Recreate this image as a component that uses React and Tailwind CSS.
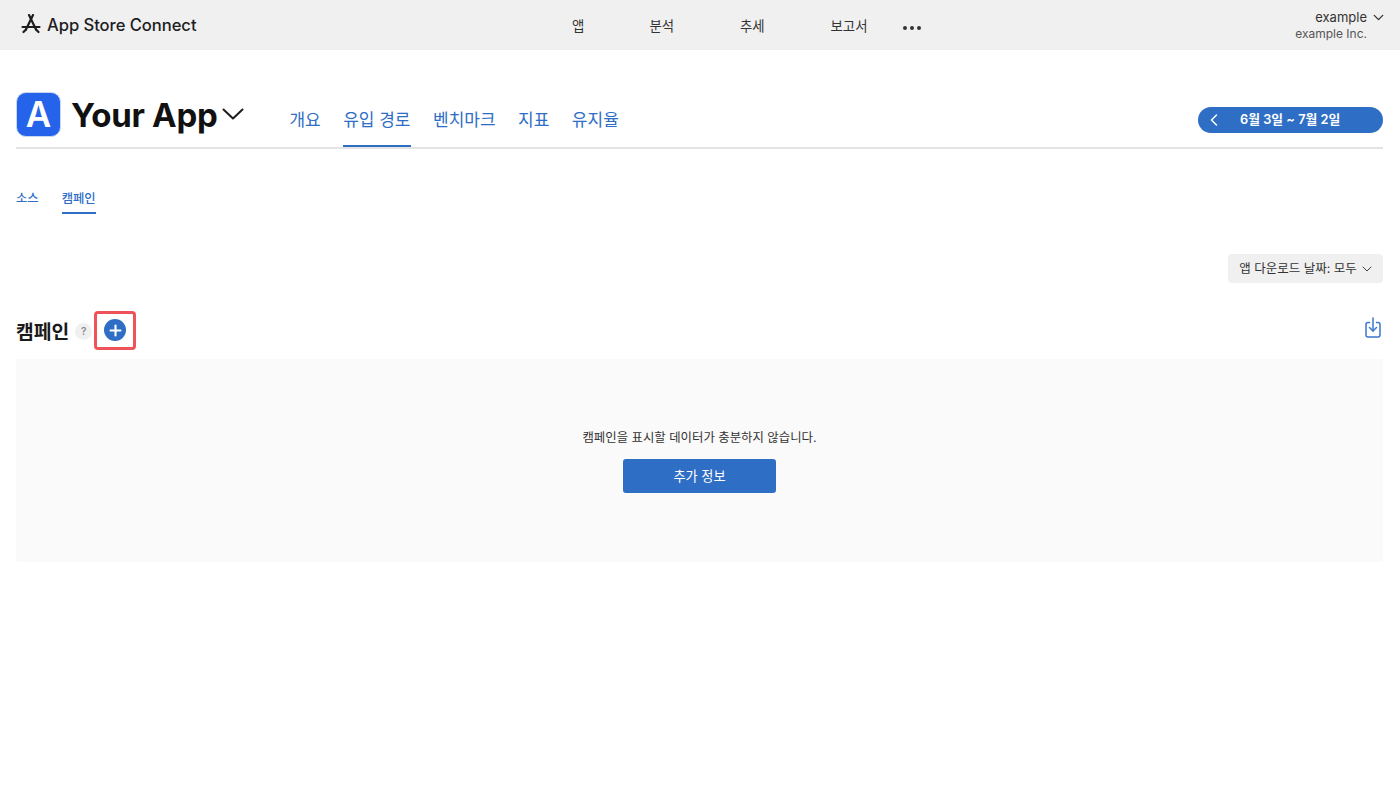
import { ChevronDown, ChevronLeft, Plus } from "lucide-react";

const font = { fontFamily: '"Inter", "Noto Sans CJK KR", sans-serif' };

function StoreLogo({ className }) {
  return (
    <svg viewBox="0 0 20 20" className={className} fill="none" stroke="#1d1d1f" strokeWidth="2.2" strokeLinecap="round">
      <path d="M8 1 L15 15.5" />
      <path d="M12 1 L5 15.5" />
      <path d="M1.5 13 H18.5" />
      <path d="M2.5 18 L5 15.5" />
      <path d="M15 15.5 L17.5 18" />
    </svg>
  );
}

const mainNav = [
  { label: "앱", width: "w-[12px]" },
  { label: "분석", width: "w-[25px]" },
  { label: "추세", width: "w-[25px]" },
  { label: "보고서", width: "w-[37px]" },
];

const appTabs = ["개요", "유입 경로", "벤치마크", "지표", "유지율"];

export default function App() {
  return (
    <div style={font} className="min-h-[800px] bg-white text-[#1d1d1f]">
      <header className="relative h-[50px] bg-[#f0f0f0] flex items-center pl-[21px] pr-[16px]">
        <StoreLogo className="w-[20px] h-[20px] mb-[2px]" />
        <span className="ml-[6px] text-[16.6px] font-medium tracking-[-0.05px]">App Store Connect</span>
        <nav className="absolute left-[572px] top-0 h-[50px] flex items-center gap-[65.5px] text-[13.4px] text-[#333]">
          {mainNav.map((n) => (
            <span key={n.label} className={"whitespace-nowrap pt-[3px] " + n.width}>{n.label}</span>
          ))}
          <span className="flex gap-[3px] -ml-[30px] mt-[6px]">
            <i className="block w-[4px] h-[4px] rounded-full bg-[#333]" />
            <i className="block w-[4px] h-[4px] rounded-full bg-[#333]" />
            <i className="block w-[4px] h-[4px] rounded-full bg-[#333]" />
          </span>
        </nav>
        <div className="ml-auto flex flex-col items-end text-right pr-[1px]">
          <div className="flex items-center text-[13px] leading-[16px] text-[#333] mb-[1px]">
            example
            <ChevronDown className="w-[17px] h-[17px] ml-[3px] -mr-[4px] -my-[1px]" strokeWidth={1.9} />
          </div>
          <div className="text-[12px] leading-[15px] text-[#555] pr-[16px]">example Inc.</div>
        </div>
      </header>

      <main className="pl-[16px] pr-[17px]">
        <div className="h-[99px] flex items-end border-b-2 border-[#e3e3e3]">
          <div className="flex items-center self-start mt-[42px]">
            <div className="w-[45px] h-[45px] rounded-[10px] bg-[#2563eb] border border-[#c9d6f0] flex items-center justify-center text-white text-[35px] font-semibold leading-none">
              A
            </div>
            <span className="ml-[10px] pt-[2px] text-[33px] font-bold tracking-[-0.3px] text-[#111] leading-none">Your App</span>
            <svg viewBox="0 0 22 12" className="w-[22px] h-[12px] ml-[5px] mt-[-2px]" fill="none" stroke="#1d1d1f" strokeWidth="2" strokeLinecap="round" strokeLinejoin="round">
              <path d="M1.5 1.5 L11 10.5 L20.5 1.5" />
            </svg>
          </div>
          <nav className="ml-[45px] flex gap-[22.5px] text-[17px] text-[#2f6ec5] h-[50px]">
            {appTabs.map((t) => (
              <span
                key={t}
                className={
                  "flex items-center pb-[1px] border-b-2 " +
                  (t === "유입 경로" ? "border-[#2f6ec5]" : "border-transparent")
                }
              >
                {t}
              </span>
            ))}
          </nav>
          <div className="ml-auto self-start mt-[57px] w-[185px] h-[26px] rounded-full bg-[#2f6ec5] text-white flex items-center">
            <ChevronLeft className="w-[20px] h-[20px] ml-[6px]" strokeWidth={1.8} />
            <span className="ml-[16px] text-[12.8px] font-semibold whitespace-nowrap">6월 3일 ~ 7월 2일</span>
          </div>
        </div>

        <div className="flex gap-[23px] mt-[38px] text-[12.3px] font-medium text-[#2f6ec5]">
          <span className="h-[27px] pt-[3px]">소스</span>
          <span className="h-[27px] pt-[3px] border-b-2 border-[#2f6ec5]">캠페인</span>
        </div>

        <div className="flex justify-end mt-[40px]">
          <div className="h-[29px] w-[155px] pt-px rounded-[4px] bg-[#f0f0f0] flex items-center justify-center text-[12.5px] text-[#333]">
            앱 다운로드 날짜: 모두
            <ChevronDown className="w-[16px] h-[16px] ml-[2px] -mr-[3px]" strokeWidth={1.4} />
          </div>
        </div>

        <div className="flex items-center h-[40px] mt-[27px]">
          <h2 className="text-[19.3px] font-semibold text-[#1a1a1a] pt-[4px]">캠페인</h2>
          <span className="ml-[6px] mt-[3px] w-[17px] h-[17px] rounded-full bg-[#f0f0f0] text-[#888] text-[10px] font-semibold flex items-center justify-center">?</span>
          <div className="ml-[2px] w-[42px] h-[39px] rounded-[4px] border-[3px] border-[#f0525a] flex items-center justify-center">
            <div className="w-[22px] h-[22px] rounded-full bg-[#2f6ec5] flex items-center justify-center">
              <Plus className="w-[17px] h-[17px] text-white" strokeWidth={3} />
            </div>
          </div>
          <svg viewBox="0 0 18 22" className="ml-auto w-[18px] h-[22px] mr-px mb-[5px]" fill="none" stroke="#3a78d0" strokeWidth="1.5" strokeLinecap="round" strokeLinejoin="round">
            <path d="M5.5 5.5 H4 a2 2 0 0 0 -2 2 V18 a2 2 0 0 0 2 2 H14 a2 2 0 0 0 2 -2 V7.5 a2 2 0 0 0 -2 -2 H12.5" />
            <path d="M9 1 V14" />
            <path d="M5.5 10.5 L9 14 L12.5 10.5" />
          </svg>
        </div>

        <section className="mt-[9px] h-[203px] bg-[#fafafa] rounded-[2px] flex flex-col items-center pt-[71px]">
          <p className="text-[12.4px] leading-[16px] text-[#333]">캠페인을 표시할 데이터가 충분하지 않습니다.</p>
          <button className="mt-[13px] w-[153px] h-[34px] pt-px rounded-[3px] bg-[#2f6ec5] text-white text-[13.2px]">추가 정보</button>
        </section>
      </main>
    </div>
  );
}
